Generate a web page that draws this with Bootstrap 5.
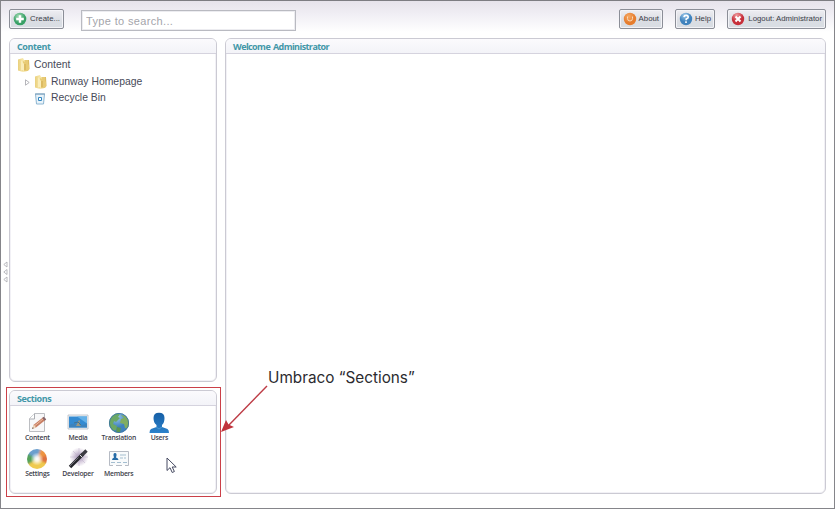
<!DOCTYPE html>
<html lang="en">
<head>
<meta charset="utf-8">
<title>Umbraco</title>
<link href="https://cdn.jsdelivr.net/npm/bootstrap@5.3.0/dist/css/bootstrap.min.css" rel="stylesheet">
<style>
body{font-family:"Liberation Sans",Arial,sans-serif;color:#474a58;background:#fff}
.frame{width:835px;height:509px;border:1px solid #85858a;border-top-color:#7d7d82;overflow:hidden;background:linear-gradient(#e6e3eb 0,#f0eef4 13px,#fff 31px)}
.topbar{height:37px;padding:8px 8px 0}
.tool{height:20px;font-size:7.8px;line-height:18px;color:#3b3e48;padding:0 3px;border:1px solid #8b8e97;border-radius:2px;background:linear-gradient(#eeedf2,#dadde3 60%,#d8dde3);white-space:nowrap;box-shadow:inset 0 0 0 1px #f3f3f7}
.tool svg{width:14px;height:14px;flex:none}
.create{width:55px}
.about{width:44px;margin-right:12px}
.help{width:40px;margin-right:12px}
.logout{width:99px}
.search{width:215px;height:21px;margin:1px 0 0 17px;padding:0 4px;font-size:11px;letter-spacing:.35px;border:1px solid #b9bac1;border-radius:0;box-shadow:inset 0 0 0 1px #ececf0}
.search::placeholder{color:#a4a5ab;opacity:1}
.main-area{padding:0 8px;height:456px}
.side{width:208px}
.sections{height:104px;flex:none}
.panel{border:1px solid #cbcad3;border-radius:6px;background:#fff;box-shadow:inset 0 0 0 1px #f2f1f6;overflow:hidden}
.panel-title{height:15px;padding:0 7px;font:700 9px/15px "Open Sans",sans-serif;letter-spacing:-.57px;word-spacing:1px;color:#4297a8;background:linear-gradient(#fbfafd,#f3f3f8);border-bottom:1px solid #d5d3de;margin:0}
.side .panel-title{letter-spacing:-.4px}
.tree{padding:3px 8px 0 7px;font-size:10.4px;line-height:16.7px;margin:0}
.tree li{height:16.7px;gap:4px}
.tree svg{flex:none}
.sections-grid{padding:6px 7px 0;display:grid;grid-template-columns:repeat(4,40.7px);grid-auto-rows:36px}
.section-item{font:600 6.8px/8px "Open Sans",sans-serif;letter-spacing:-.25px;color:#3e414b;white-space:nowrap}
.section-item svg{width:22px;height:22px;flex:none}
.grips{left:2px;top:259px}
.callout-box{left:5px;top:386px;width:215px;height:110px;border:1px solid #cb4049}
.callout-arrow{left:215px;top:379px}
.callout-text{left:267px;top:365px;font:15.3px/24px Inter,sans-serif;color:#2b2b2f;white-space:nowrap}
.pointer{left:165px;top:456px}
</style>
<script src="https://cdn.jsdelivr.net/npm/bootstrap@5.3.0/dist/js/bootstrap.bundle.min.js"></script>
</head>
<body>
<svg width="0" height="0" class="position-absolute">
<defs>
<linearGradient id="gold"><stop offset="0" stop-color="#e9cf7c"/><stop offset=".45" stop-color="#f8e9ad"/><stop offset="1" stop-color="#d9b557"/></linearGradient>
<radialGradient id="green" cx=".4" cy=".3"><stop offset="0" stop-color="#a5ddb6"/><stop offset="1" stop-color="#38a066"/></radialGradient>
<radialGradient id="orange" cx=".4" cy=".3"><stop offset="0" stop-color="#f5a965"/><stop offset="1" stop-color="#e67d2e"/></radialGradient>
<radialGradient id="blue" cx=".4" cy=".2"><stop offset="0" stop-color="#9cc8ea"/><stop offset="1" stop-color="#3f82bd"/></radialGradient>
<radialGradient id="red" cx=".4" cy=".2"><stop offset="0" stop-color="#ef9c9f"/><stop offset="1" stop-color="#c72f3a"/></radialGradient>
<linearGradient id="person" x2="0" y2="1"><stop offset="0" stop-color="#165fa6"/><stop offset="1" stop-color="#2c82cb"/></linearGradient>
<radialGradient id="halo"><stop offset="0" stop-color="#9c8aad"/><stop offset=".55" stop-color="#d9cfe0"/><stop offset="1" stop-color="#fff"/></radialGradient>
<radialGradient id="core"><stop offset="0" stop-color="#fff"/><stop offset=".35" stop-color="#fff" stop-opacity=".8"/><stop offset="1" stop-color="#fff" stop-opacity="0"/></radialGradient>
<filter id="soft"><feGaussianBlur stdDeviation="1"/></filter>
<clipPath id="disc"><circle cx="11" cy="11" r="10"/></clipPath>
<symbol id="folder" viewBox="0 0 13 14"><path d="M1 1.500L6 0l1 2h5l.5 9-2 2L6 14l-5-1.500z" fill="url(#gold)"/><path d="M6 3l2 1V2h3v4l1 1v5l-2 1H5z" fill="#e8cb75"/><path d="M4 2l3 4v7l-3-1z" fill="#faedba"/><path d="M8 6v6" stroke="#c59e42" stroke-width=".7"/></symbol>
</defs>
</svg>
<div class="frame position-relative">
  <header class="topbar d-flex align-items-start">
    <button class="tool create d-flex align-items-center"><svg viewBox="0 0 14 14"><circle cx="7" cy="7" r="6.300" fill="url(#green)"/><path d="M7 3.200v7.600M3.200 7h7.600" stroke="#fff" stroke-width="2.400"/></svg><span class="ms-auto">Create...</span></button>
    <input class="search form-control" placeholder="Type to search...">
    <div class="d-flex ms-auto">
      <button class="tool about d-flex align-items-center"><svg viewBox="0 0 14 14"><circle cx="7" cy="7" r="6.200" fill="url(#orange)"/><path d="M4.500 4.500v2a2.500 2.500 0 0 0 5 0v-2" fill="none" stroke="#fbd9b8" stroke-width="1"/></svg><span class="ms-auto">About</span></button>
      <button class="tool help d-flex align-items-center"><svg viewBox="0 0 14 14"><circle cx="7" cy="7" r="6.200" fill="url(#blue)"/><path d="M4.900 5.200Q5.200 3.400 7.200 3.400T9.200 5.200Q9.200 6.300 7.200 7V8.300M7 9.300V11" fill="none" stroke="#fff" stroke-width="1.600"/></svg><span class="ms-auto">Help</span></button>
      <button class="tool logout d-flex align-items-center"><svg viewBox="0 0 14 14"><circle cx="7" cy="7" r="6.200" fill="url(#red)"/><path d="M4.500 4.500l5 5M9.500 4.500l-5 5" stroke="#fff" stroke-width="2"/></svg><span class="ms-auto">Logout: Administrator</span></button>
    </div>
  </header>
  <div class="main-area d-flex gap-2">
    <div class="side d-flex flex-column gap-2">
      <section class="panel flex-grow-1">
        <h2 class="panel-title">Content</h2>
        <ul class="tree list-unstyled">
          <li class="d-flex align-items-center"><svg width="13" height="14"><use href="#folder"/></svg><span>Content</span></li>
          <li class="d-flex align-items-center ps-2"><svg width="5" height="7" viewBox="0 0 5 7"><path d="M.5.800v5.400L4.200 3.500z" fill="#fff" stroke="#a3a3aa" stroke-width=".8"/></svg><svg width="13" height="14"><use href="#folder"/></svg><span>Runway Homepage</span></li>
          <li class="d-flex align-items-center ps-3"><svg width="14" height="14" viewBox="0 0 13 14"><path d="M2 2h9l-1 10H3z" fill="#e9f3f9" stroke="#8db6d2"/><path d="M1.500 2h10" stroke="#7d9eb9"/><path d="M5 5.500h3v3H5z" fill="#fff" stroke="#3287c2"/></svg><span>Recycle Bin</span></li>
        </ul>
      </section>
      <section class="panel sections">
        <h2 class="panel-title">Sections</h2>
        <div class="sections-grid">
          <div class="section-item d-flex flex-column align-items-center"><svg viewBox="0 0 22 22"><path d="M3.500 6.500l5-5h10v18h-15z" fill="#f8f8f9" stroke="#bcbec2"/><path d="M3.500 7h5V1.500" fill="#fff" stroke="#aaadb3"/><path d="M6 17l2-4.500L17.500 5l2.500 2.500L10 15.500z" fill="#c87f65"/><path d="M17 5.400L19.500 8" stroke="#85656b" stroke-width="2"/><path d="M6 17l2-4.500 2 3z" fill="#f1d8bc"/><path d="M9 13.500l8-6.500" stroke="#edbb9d"/><path d="M6 17l.8-1.800 1 .8z" fill="#555"/></svg><span>Content</span></div>
          <div class="section-item d-flex flex-column align-items-center"><svg viewBox="0 0 22 22"><path d="M1 3h20v14H1z" fill="#f2f4f6" stroke="#b7bcc4" stroke-width=".8"/><path d="M2 4.500h18v11H2z" fill="#348bd2"/><path d="M10 4.500h10v7z" fill="#64b1e8"/><path d="M2 13q5-2 8-.5t10-1v4H2z" fill="#3d83bd"/><path d="M9 14l2-4 1-2 1 1-1 3 2 2z" fill="#9d9980"/><path d="M7 11l4-1 3 3" stroke="#487189" fill="none"/></svg><span>Media</span></div>
          <div class="section-item d-flex flex-column align-items-center"><svg viewBox="0 0 22 22"><circle cx="11" cy="11" r="10" fill="url(#blue)"/><g clip-path="url(#disc)"><path d="M1 9l3-5 5-3 3 1-2 3 2 1-4 4-2-1-1 3 4 2-1 4-3 1-4-6z" fill="#6ba865"/><path d="M13 3l5 1 4 6-1 7-4-1-1-4-4-1 1-4 3-1z" fill="#80ad61"/><path d="M9 15l4 1-1 4-4 1z" fill="#5d974f"/></g><circle cx="11" cy="11" r="9.600" fill="none" stroke="#3b729f" stroke-width=".8"/></svg><span>Translation</span></div>
          <div class="section-item d-flex flex-column align-items-center"><svg viewBox="0 0 22 22"><path d="M5.500 6Q5.500 .8 11 .8T16.500 6q0 5-2.500 7v2l5.500 2q1.500 1 1.500 4H1.500q0-3 1.500-4l5.500-2v-2Q5.500 11 5.500 6z" fill="url(#person)"/><path d="M8 15l3 2 3-2" fill="none" stroke="#4b98d2"/></svg><span>Users</span></div>
          <div class="section-item d-flex flex-column align-items-center"><svg viewBox="0 0 22 22"><g clip-path="url(#disc)"><g filter="url(#soft)"><path d="M11 11L-1 8V-2H16z" fill="#6c9fce"/><path d="M11 11L16-2h8v11z" fill="#ee9440"/><path d="M11 11L24 6v12z" fill="#de6f40"/><path d="M11 11l13 6v8H-1v-8z" fill="#efca50"/><path d="M11 11L-1 18V4z" fill="#55a25a"/></g><circle cx="11" cy="11" r="6.500" fill="url(#core)"/></g></svg><span>Settings</span></div>
          <div class="section-item d-flex flex-column align-items-center"><svg viewBox="0 0 22 22"><circle cx="12" cy="9" r="9.500" fill="url(#halo)"/><path d="M12 0v18M3 9h18M6 3l12 12M18 3L6 15" stroke="#bdb0c8" stroke-width=".5"/><path d="M3 19L16 6" stroke="#26262c" stroke-width="3.400"/><path d="M13.500 8.500L19.500 2.500" stroke="#3b3b42" stroke-width="3.400"/><path d="M13 7l2.500 2.500" stroke="#ddd" stroke-width="1"/><path d="M3 18L11.500 9.500" stroke="#85858d" stroke-width=".8"/></svg><span>Developer</span></div>
          <div class="section-item d-flex flex-column align-items-center"><svg viewBox="0 0 22 22"><path d="M1.500 3.500h19v14h-19z" fill="#f8fafb" stroke="#b6bbc4"/><path d="M4 12q0-2 2-2.500Q4.500 5 7 5t1 4.500q2.500.5 2.500 2.500z" fill="#256ba7"/><path d="M12 7h6M12 10h3m1 0h2M3 14.500h4m2 0h4m2 0h4" stroke="#a4bed0" stroke-width="1.200"/><path d="M5 17.500h3m6 0h3" stroke="#fff"/></svg><span>Members</span></div>
        </div>
      </section>
    </div>
    <section class="panel flex-grow-1"><h2 class="panel-title">Welcome Administrator</h2></section>
  </div>
  <svg class="grips position-absolute" width="5" height="24" viewBox="0 0 5 24"><g fill="#fff" stroke="#aaaab0" stroke-width=".8"><path d="M4 2v5L.800 4.500z"/><path d="M4 9.500v5L.800 12z"/><path d="M4 17v5L.800 19.500z"/></g></svg>
  <div class="callout-box position-absolute"></div>
  <svg class="callout-arrow position-absolute" width="60" height="60"><path d="M51 6L12 46" stroke="#bd3b45" stroke-width="1.400"/><path d="M5 52l5-12 2.500 4.500 5.500 2.500z" fill="#c1343c"/></svg>
  <div class="callout-text position-absolute">Umbraco “Sections”</div>
  <svg class="pointer position-absolute" width="12" height="17" viewBox="0 0 12 17"><path d="M1 1v12.500l3-2.800 2.200 4.800 2.200-1-2.200-4.500h4z" fill="#fff" stroke="#474b62"/></svg>
</div>
</body>
</html>
